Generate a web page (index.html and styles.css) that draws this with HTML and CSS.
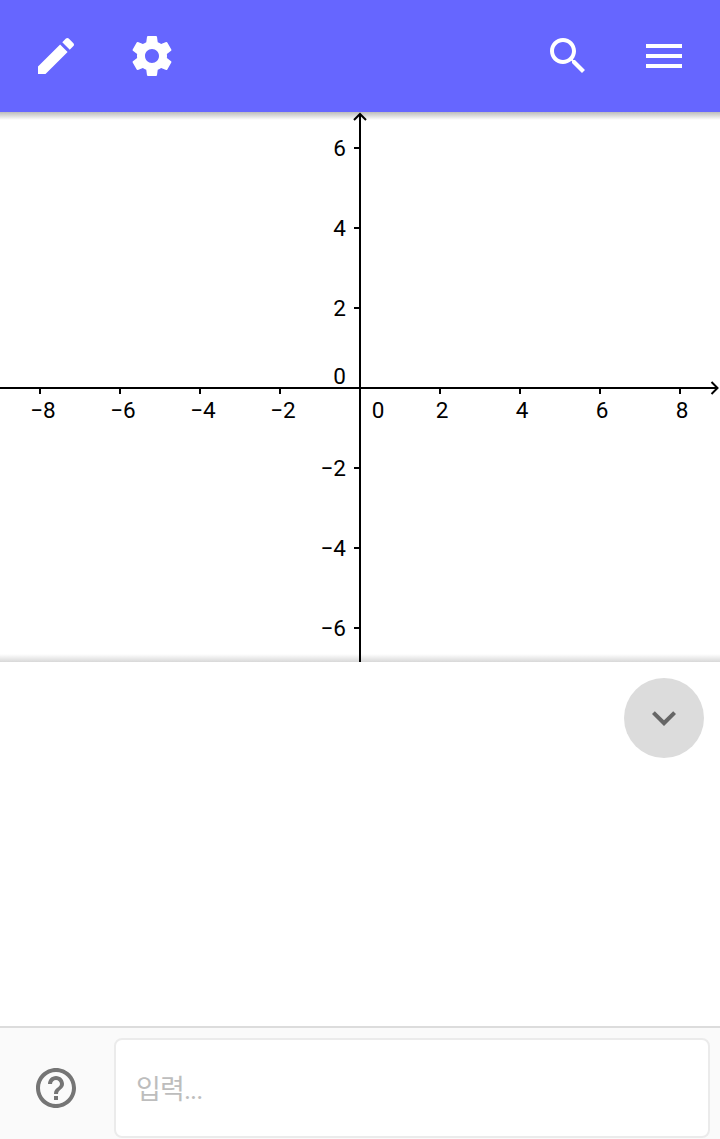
FILE: index.html
```
<!DOCTYPE html>
<html lang="ko">
  <head>
    <meta charset="UTF-8" />
    <meta name="viewport" content="width=device-width, initial-scale=1.0" />
    <title>Graphing Calculator</title>
    <link rel="stylesheet" href="styles.css">
  </head>
  <body>
    <header class="toolbar">
      <div class="toolbar-group">
        <button class="icon-btn" aria-label="Edit">
          <svg viewBox="0 0 24 24"><path d="M3 17.25V21h3.75L17.81 9.94l-3.75-3.75L3 17.25zM20.71 7.04c.39-.39.39-1.02 0-1.41l-2.34-2.34c-.39-.39-1.02-.39-1.41 0l-1.83 1.83 3.75 3.75 1.83-1.83z" /></svg>
        </button>
        <button class="icon-btn" aria-label="Settings">
          <svg viewBox="0 0 24 24"><path d="M19.43 12.98c.04-.32.07-.64.07-.98s-.03-.66-.07-.98l2.11-1.65c.19-.15.24-.42.12-.64l-2-3.46c-.12-.22-.39-.3-.61-.22l-2.49 1c-.52-.4-1.08-.73-1.69-.98l-.38-2.65C14.46 2.18 14.25 2 14 2h-4c-.25 0-.46.18-.49.42l-.38 2.65c-.61.25-1.17.59-1.69.98l-2.49-1c-.23-.09-.49 0-.61.22l-2 3.46c-.13.22-.07.49.12.64l2.11 1.65c-.04.32-.07.65-.07.98s.03.66.07.98l-2.11 1.65c-.19.15-.24.42-.12.64l2 3.46c.12.22.39.3.61.22l2.49-1c.52.4 1.08.73 1.69.98l.38 2.65c.03.24.24.42.49.42h4c.25 0 .46-.18.49-.42l.38-2.65c.61-.25 1.17-.59 1.69-.98l2.49 1c.23.09.49 0 .61-.22l2-3.46c.12-.22.07-.49-.12-.64l-2.11-1.65zM12 15.5c-1.93 0-3.5-1.57-3.5-3.5s1.57-3.5 3.5-3.5 3.5 1.57 3.5 3.5-1.57 3.5-3.5 3.5z" /></svg>
        </button>
      </div>
      <div class="toolbar-group">
        <button class="icon-btn" aria-label="Search">
          <svg viewBox="0 0 24 24"><path d="M15.5 14h-.79l-.28-.27C15.41 12.59 16 11.11 16 9.5 16 5.91 13.09 3 9.5 3S3 5.91 3 9.5 5.91 16 9.5 16c1.61 0 3.09-.59 4.23-1.57l.27.28v.79l5 4.99L20.49 19l-4.99-5zm-6 0C7.01 14 5 11.99 5 9.5S7.01 5 9.5 5 14 7.01 14 9.5 11.99 14 9.5 14z" /></svg>
        </button>
        <button class="icon-btn" aria-label="Menu">
          <svg viewBox="0 0 24 24"><path d="M3 18h18v-2H3v2zm0-5h18v-2H3v2zm0-7v2h18V6H3z" /></svg>
        </button>
      </div>
    </header>

    <main class="graphics-view">
      <svg class="plot" viewBox="0 0 720 550" width="720" height="550">
        <!-- axes and arrow heads -->
        <path class="axis" d="M0 276H718M360 550V3" />
        <path class="axis" d="M711.5 270l6 6-6 6M354 8l6-6 6 6" />
        <!-- ticks, one every 2 units -->
        <path class="axis" d="M40 276v6M120 276v6M200 276v6M280 276v6M440 276v6M520 276v6M600 276v6M680 276v6" />
        <path class="axis" d="M360 36h-6M360 116h-6M360 196h-6M360 356h-6M360 436h-6M360 516h-6" />
        <g class="labels-x">
          <text x="43" y="306">−8</text>
          <text x="123" y="306">−6</text>
          <text x="203" y="306">−4</text>
          <text x="283" y="306">−2</text>
          <text x="378" y="306">0</text>
          <text x="442" y="306">2</text>
          <text x="522" y="306">4</text>
          <text x="602" y="306">6</text>
          <text x="682" y="306">8</text>
        </g>
        <g class="labels-y">
          <text x="346" y="44">6</text>
          <text x="346" y="124">4</text>
          <text x="346" y="204">2</text>
          <text x="346" y="272">0</text>
          <text x="346" y="364">−2</text>
          <text x="346" y="444">−4</text>
          <text x="346" y="524">−6</text>
        </g>
      </svg>
    </main>

    <section class="algebra-view">
      <button class="collapse-btn" aria-label="Collapse">
        <svg viewBox="0 0 24 24"><path d="M16.59 8.59L12 13.17 7.41 8.59 6 10l6 6 6-6z" /></svg>
      </button>
    </section>

    <footer class="input-bar">
      <button class="icon-btn help-btn" aria-label="Help">
        <svg viewBox="0 0 24 24"><path d="M11 18h2v-2h-2v2zm1-16C6.48 2 2 6.48 2 12s4.48 10 10 10 10-4.48 10-10S17.52 2 12 2zm0 18c-4.41 0-8-3.59-8-8s3.59-8 8-8 8 3.59 8 8-3.59 8-8 8zm0-14c-2.21 0-4 1.79-4 4h2c0-1.1.9-2 2-2s2 .9 2 2c0 2-3 1.75-3 5h2c0-2.25 3-2.5 3-5 0-2.21-1.79-4-4-4z" /></svg>
      </button>
      <input class="algebra-input" type="text" placeholder="입력..." />
    </footer>
  </body>
</html>
```
FILE: styles.css
```
* {
  margin: 0;
  padding: 0;
  box-sizing: border-box;
}

body {
  background-color: #ffffff;
  height: 100vh;
  display: flex;
  flex-direction: column;
  font-family: Roboto, "Noto Sans CJK KR", sans-serif;
  overflow: hidden;
}

button {
  border: none;
  background: none;
  cursor: pointer;
}

svg {
  display: block;
}

.toolbar {
  height: 112px;
  flex-shrink: 0;
  background-color: #6666ff;
  padding: 0 32px;
  display: flex;
  align-items: center;
  justify-content: space-between;
}

.toolbar-group {
  display: flex;
  gap: 48px;
}

.icon-btn {
  width: 48px;
  height: 48px;
  flex-shrink: 0;
}

.icon-btn svg {
  width: 48px;
  height: 48px;
  fill: #ffffff;
}

.graphics-view {
  height: 550px;
  flex-shrink: 0;
  background: linear-gradient(#bcbcbc, rgba(255, 255, 255, 0)) top / 100% 8px no-repeat,
    linear-gradient(rgba(255, 255, 255, 0), #d8d8d8) bottom / 100% 8px no-repeat;
}

.axis {
  fill: none;
  stroke: #000000;
  stroke-width: 2;
}

.plot text {
  font-size: 22.5px;
  fill: #000000;
}

.labels-x {
  text-anchor: middle;
}

.labels-y {
  text-anchor: end;
}

.algebra-view {
  flex: 1;
  padding: 16px;
  display: flex;
  align-items: flex-start;
  justify-content: flex-end;
}

.collapse-btn {
  width: 80px;
  height: 80px;
  border-radius: 50%;
  background-color: #dcdcdc;
  display: flex;
  align-items: center;
  justify-content: center;
}

.collapse-btn svg {
  width: 48px;
  height: 48px;
  fill: #666666;
}

.input-bar {
  height: 113px;
  flex-shrink: 0;
  background-color: #fafafa;
  border-top: 2px solid #dcdcdc;
  padding: 10px 10px 1px 32px;
  display: flex;
  align-items: center;
  gap: 34px;
}

.help-btn svg {
  fill: #757575;
}

.algebra-input {
  flex: 1;
  min-width: 0;
  height: 100px;
  border: 2px solid #ebebeb;
  border-radius: 8px;
  background-color: #ffffff;
  padding: 3px 20px 0;
  font-family: Roboto, "Noto Sans CJK KR", sans-serif;
  font-size: 27px;
  letter-spacing: -0.9px;
  outline: none;
}

.algebra-input::placeholder {
  color: #bdbdbd;
}
```
